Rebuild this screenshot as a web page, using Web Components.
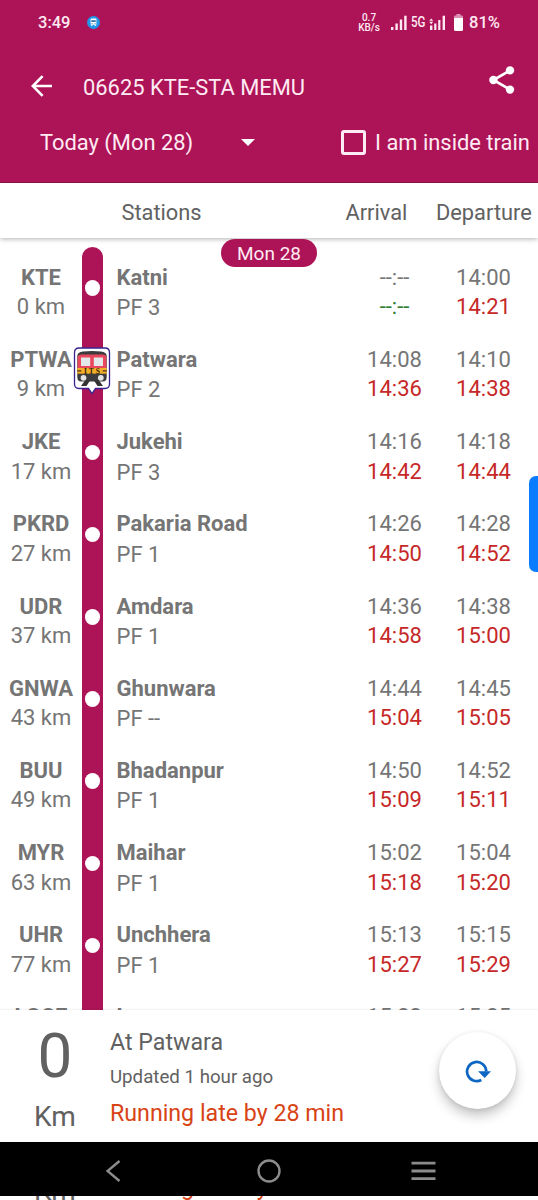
<!DOCTYPE html>
<html lang="en">
<head>
<meta charset="utf-8">
<meta name="viewport" content="width=device-width, initial-scale=1">
<title>06625 KTE-STA MEMU</title>
<style>
    html, body {
        margin: 0;
        height: 1200px;
        overflow: hidden;
    }

    body {
        font-family: Roboto, "Liberation Sans", sans-serif;
        background: #fff;
    }
</style>
</head>
<body>
<train-app></train-app>

<script>
const html = String.raw;

class BaseElement extends HTMLElement {
    constructor() {
        super();
        this.attachShadow({ mode: 'open' });
    }

    connectedCallback() {
        this.shadowRoot.innerHTML = this.render();
    }
}

/** System status bar: clock, network speed, signal and battery. */
class StatusBar extends BaseElement {
    render() {
        return html`
            <style>
                :host {
                    display: flex;
                    align-items: center;
                    height: 45px;
                    padding-left: 38px;
                    color: #ffe9f2;
                    font-weight: 500;
                    white-space: nowrap;
                }
                svg { display: block; flex: none; }
                .time { width: 49px; font-size: 16.5px; }
                .speed {
                    width: 24px;
                    margin-left: 257px;
                    text-align: center;
                    font-size: 10px;
                    line-height: 10px;
                }
                .signal { margin-left: 10px; }
                .net { width: 18px; margin-left: 4px; font-size: 14.5px; }
                .net span { display: block; transform: scaleX(.8); transform-origin: 0 50%; }
                .battery { margin-left: 8px; }
                .level { margin-left: 6px; font-size: 16.5px; }
            </style>
            <span class="time">3:49</span>
            <svg width="13" height="13" viewBox="0 0 13 13">
                <circle cx="6.5" cy="6.5" r="6.5" fill="#2196e8"/>
                <path d="M3.6 3.6q0-1 1-1h3.8q1 0 1 1v5.2H3.6z" fill="#fff"/>
                <path d="M4.3 4.3h4.4v1.6H4.3z" fill="#1c5f9c"/>
                <path d="M4.2 9h1.2v1H4.2zM7.6 9h1.2v1H7.6z" fill="#fff"/>
                <circle cx="5" cy="7.5" r=".5" fill="#1c5f9c"/>
                <circle cx="8" cy="7.5" r=".5" fill="#1c5f9c"/>
            </svg>
            <span class="speed">0.7<br>KB/s</span>
            <svg class="signal" width="16" height="15" viewBox="0 0 16 15" fill="currentColor">
                <path d="M0 12h2.4v3H0zM4.4 8.6h2.4V15H4.4zM8.8 4.6h2.4V15H8.8zM13.2.8h2.4V15h-2.4z"/>
            </svg>
            <span class="net"><span>5G</span></span>
            <svg width="17" height="15" viewBox="0 0 17 15" fill="currentColor">
                <path d="M1 10.6h2.4V15H1zM5.2 8.6h2.2V15H5.2zM9.2 5h2.2v10H9.2zM13.6.8H16V15h-2.4z"/>
                <path d="M2.2 3.4l2 2.4h-4zM2.2 9.2l2-2.4h-4z"/>
            </svg>
            <svg class="battery" width="9" height="17" viewBox="0 0 9 17">
                <path d="M2.4 0h4.2v1.4H7.6Q9 1.4 9 2.8V4H0V2.8Q0 1.4 1.4 1.4h1z" fill="#dc8fb2"/>
                <path d="M0 4h9v11.4Q9 17 7.4 17H1.6Q0 17 0 15.4z" fill="#fff"/>
            </svg>
            <span class="level">81%</span>
        `;
    }
}

/** Coloured header with title, day selector and the inside-train checkbox. */
class AppHeader extends BaseElement {
    render() {
        return html`
            <style>
                :host {
                    display: block;
                    box-sizing: border-box;
                    height: 183px;
                    background: #ad1457;
                    border-bottom: 1px solid #8a1247;
                    color: #ffebf3;
                    font-size: 21.9px;
                    white-space: nowrap;
                }
                svg { display: block; flex: none; }
                .bar { display: flex; align-items: center; height: 84px; padding-left: 31px; }
                .back { margin-top: -3px; }
                .title { margin-left: 31px; width: 406px; }
                .share { margin-top: -14px; }
                .options { display: flex; align-items: center; height: 26px; padding-left: 40px; }
                .day { width: 201px; }
                .box {
                    box-sizing: border-box;
                    width: 25px;
                    height: 25px;
                    margin: 0 9px 0 86px;
                    border: 3px solid #ffebf3;
                    border-radius: 3px;
                }
            </style>
            <status-bar></status-bar>
            <div class="bar">
                <svg class="back" width="21" height="22" viewBox="0 0 21 22" fill="none" stroke="#fff" stroke-width="2.6">
                    <path d="M21 11H2M11.6 1.2L1.8 11l9.8 9.8"/>
                </svg>
                <span class="title"><slot name="title"></slot></span>
                <svg class="share" width="26" height="28" viewBox="0 0 26 28">
                    <path d="M21 4.4L4.4 14 21 23.6" fill="none" stroke="#fff" stroke-width="2.6"/>
                    <g fill="#fff">
                        <circle cx="21" cy="4.4" r="4.2"/>
                        <circle cx="4.4" cy="14" r="4.2"/>
                        <circle cx="21" cy="23.6" r="4.2"/>
                    </g>
                </svg>
            </div>
            <div class="options">
                <span class="day"><slot name="day"></slot></span>
                <svg width="14" height="7" viewBox="0 0 14 7"><path d="M0 0h14L7 7z" fill="#fff"/></svg>
                <span class="box"></span>
                <span class="inside">I am inside train</span>
            </div>
        `;
    }
}

class TrainMarker extends BaseElement {
    render() {
        return html`
            <style>
                :host { display: block; width: 38px; height: 48px; }
                svg { display: block; }
            </style>
            <svg width="38" height="48" viewBox="0 0 38 48">
                <path d="M6 1h26q4.5 0 4.5 4.5v31.500q0 4.500-4.500 4.500h-9.500L19 46.500l-3.500-5H6q-4.500 0-4.500-4.500V5.500Q1.500 1 6 1z" fill="#fff" stroke="#3a2390" stroke-width="1.300"/>
                <path d="M4.300 9q0-4 5.700-4.500 9-.8 18 0 5.700 .5 5.700 4.500v21q0 4.500-4 4.500H8.300q-4 0-4-4.500z" fill="#3c3b3d"/>
                <path d="M4.600 21v-10.500q0-3 4-3h20.800q4 0 4 3V21z" fill="#e9475c"/>
                <path d="M4.300 21h29.400v5.700H4.300z" fill="#f4ad28"/>
                <path d="M8 10.500h9.200v8.500H8zM20.800 10.500H30v8.500h-9.200z" fill="#e3e8ea"/>
                <path d="M4.300 23.300h4v1.300h-4zM29.700 23.300h4v1.300h-4z" fill="#4a3210"/>
                <path d="M12 33.500h5L13.500 39H8zM21 33.500h5L30 39h-5.500z" fill="#333"/>
                <circle cx="10.500" cy="30.800" r="2.900" fill="#e3e3e3"/>
                <circle cx="27.800" cy="30.800" r="2.900" fill="#e3e3e3"/>
                <text x="20" y="26.500" text-anchor="middle" font-family="Liberation Serif, serif" font-weight="700" font-size="7.500" letter-spacing="2" fill="#2d2108">ITS</text>
            </svg>
        `;
    }
}

/**
 * One stop of the route.
 *
 * @attribute {string} code - station code
 * @attribute {string} km - distance from the origin
 * @attribute {string} name - station name
 * @attribute {string} pf - platform
 * @attribute {string} arr - scheduled and actual arrival, space separated
 * @attribute {string} dep - scheduled and actual departure, space separated
 * @attribute {boolean} first - rounds the top of the rail
 * @attribute {boolean} current - shows the train marker
 */
class StationRow extends BaseElement {
    times(attr) {
        const [plan, real] = this.getAttribute(attr).split(' ');
        const cls = real.startsWith('-') ? 'ok' : 'late';
        return html`<div class="time"><div>${plan}</div><div class="${cls}">${real}</div></div>`;
    }

    render() {
        const a = n => this.getAttribute(n);
        const mark = this.hasAttribute('current') ? '<train-marker></train-marker>' : '<i></i>';
        return html`
            <style>
                :host {
                    display: grid;
                    grid-template-columns: 82px 21px 247px 89px 89px;
                    height: 82.2px;
                    color: #757575;
                    font-size: 22px;
                    line-height: 29.5px;
                    white-space: nowrap;
                }
                b { display: block; font-weight: 700; }
                .code, .name, .time { padding-top: 15.8px; }
                .code { display: flex; flex-direction: column; align-items: center; }
                .name { padding-left: 13.5px; }
                .name div { line-height: 31px; }
                .time { text-align: center; }
                .rail {
                    position: relative;
                    display: flex;
                    align-items: center;
                    justify-content: center;
                    background: #ad1457;
                }
                :host([first]) .rail { border-radius: 10.5px 10.5px 0 0; }
                i { width: 15.5px; height: 15.5px; border-radius: 50%; background: #fff; }
                train-marker { position: absolute; left: -9px; top: 18px; }
                .late { color: #c62828; }
                .ok { color: #2e7d32; }
            </style>
            <div class="code"><b>${a('code')}</b><span>${a('km')} km</span></div>
            <div class="rail">${mark}</div>
            <div class="name"><b>${a('name')}</b><div>PF ${a('pf')}</div></div>
            ${this.times('arr')}
            ${this.times('dep')}
        `;
    }
}

class StationList extends BaseElement {
    render() {
        return html`
            <style>
                :host { display: block; height: 827px; overflow: hidden; position: relative; }
                .head {
                    position: relative;
                    display: flex;
                    align-items: center;
                    height: 55px;
                    padding: 3px 0 0 121.5px;
                    box-sizing: border-box;
                    background: #fff;
                    box-shadow: 0 1px 5px rgba(0, 0, 0, .3);
                    color: #616161;
                    font-size: 21.8px;
                    white-space: nowrap;
                }
                .head span:nth-child(1) { width: 224px; }
                .head span:nth-child(2) { width: 90.5px; }
                .rows { padding-top: 9px; }
                .chip {
                    position: absolute;
                    left: 221px;
                    top: 56px;
                    width: 96px;
                    height: 28px;
                    border-radius: 14px;
                    background: #ad1457;
                    color: #ffebf3;
                    font-size: 19px;
                    line-height: 29px;
                    text-align: center;
                }
                .handle {
                    position: absolute;
                    right: -8px;
                    top: 293px;
                    width: 17px;
                    height: 96px;
                    border-radius: 7px;
                    background: #0a7cff;
                }
            </style>
            <div class="head"><span>Stations</span><span>Arrival</span><span>Departure</span></div>
            <div class="rows"><slot></slot></div>
            <div class="chip">Mon 28</div>
            <div class="handle"></div>
        `;
    }
}

/** Position summary: distance on the left, running status beside it. */
class RunStatus extends BaseElement {
    render() {
        return html`
            <style>
                :host {
                    display: flex;
                    height: 132px;
                    background: #fff;
                    color: #616161;
                    white-space: nowrap;
                }
                .dist { width: 110px; text-align: center; }
                .dist div { font-size: 62px; line-height: 92px; }
                .dist span { display: block; font-size: 28px; line-height: 29px; }
                .info { padding-top: 16px; }
                .at { font-size: 23.2px; line-height: 32px; }
                .small { font-size: 18.7px; line-height: 39px; }
                .late { color: #d84315; font-size: 23.2px; line-height: 32px; }
            </style>
            <div class="dist"><div>0</div><span>Km</span></div>
            <div class="info">
                <div class="at">At Patwara</div>
                <div class="small">Updated 1 hour ago</div>
                <div class="late">Running late by 28 min</div>
            </div>
        `;
    }
}

class RefreshButton extends BaseElement {
    render() {
        return html`
            <style>
                :host {
                    display: grid;
                    place-items: center;
                    width: 77px;
                    height: 77px;
                    border-radius: 50%;
                    background: #fff;
                    box-shadow: 0 7px 12px rgba(0, 0, 0, .22), 0 1px 4px rgba(0, 0, 0, .1);
                }
                svg { display: block; }
            </style>
            <svg width="28" height="24" viewBox="0 0 28 24">
                <path d="M22.300 12.500A9.600 9.600 0 1 0 17.300 21" fill="none" stroke="#0d66c2" stroke-width="2.700"/>
                <path d="M14 12.200h13l-6.300 6.800z" fill="#0d66c2"/>
            </svg>
        `;
    }
}

class NavBar extends BaseElement {
    render() {
        return html`
            <style>
                :host {
                    display: flex;
                    align-items: center;
                    box-sizing: border-box;
                    height: 54px;
                    padding: 4px 0 0 106px;
                    background: #000;
                }
                svg { display: block; }
                .home { margin-left: 137px; }
                .menu { margin-left: 130px; }
            </style>
            <svg width="14" height="22" viewBox="0 0 14 22" fill="none" stroke="#8c8c8c" stroke-width="2.4">
                <path d="M13.5 1L1.5 11l12 10"/>
            </svg>
            <svg class="home" width="24" height="24" viewBox="0 0 24 24" fill="none" stroke="#8c8c8c" stroke-width="2.4">
                <circle cx="12" cy="12" r="10.5"/>
            </svg>
            <svg class="menu" width="25" height="20" viewBox="0 0 25 20" stroke="#8c8c8c" stroke-width="2.8">
                <path d="M.5 2.2h24M.5 10h24M.5 17.7h24"/>
            </svg>
        `;
    }
}

class TrainApp extends BaseElement {
    render() {
        const stops = [
            ['KTE', 0, 'Katni', 3, '--:-- --:--', '14:00 14:21'],
            ['PTWA', 9, 'Patwara', 2, '14:08 14:36', '14:10 14:38'],
            ['JKE', 17, 'Jukehi', 3, '14:16 14:42', '14:18 14:44'],
            ['PKRD', 27, 'Pakaria Road', 1, '14:26 14:50', '14:28 14:52'],
            ['UDR', 37, 'Amdara', 1, '14:36 14:58', '14:38 15:00'],
            ['GNWA', 43, 'Ghunwara', '--', '14:44 15:04', '14:45 15:05'],
            ['BUU', 49, 'Bhadanpur', 1, '14:50 15:09', '14:52 15:11'],
            ['MYR', 63, 'Maihar', 1, '15:02 15:18', '15:04 15:20'],
            ['UHR', 77, 'Unchhera', 1, '15:13 15:27', '15:15 15:29'],
            ['LGCE', 87, 'Lagargawan', 1, '15:23 15:36', '15:25 15:38'],
        ];
        const rows = stops.map(([code, km, name, pf, arr, dep], i) => html`
            <station-row code="${code}" km="${km}" name="${name}" pf="${pf}" arr="${arr}" dep="${dep}"
                ${i === 0 ? 'first' : ''} ${i === 1 ? 'current' : ''}></station-row>
        `).join('');

        return html`
            <style>
                :host { display: block; width: 538px; height: 1200px; overflow: hidden; }
                .panel {
                    position: relative;
                    height: 132px;
                    box-shadow: 0 -1px 2px rgba(0, 0, 0, .06);
                }
                refresh-button { position: absolute; left: 439px; top: 22px; }
                nav-bar { position: relative; }
                /* sliver of the panel that shows under the navigation bar */
                .under { display: flex; align-items: flex-end; height: 4px; overflow: hidden; }
                .under run-status { margin-bottom: -16px; }
            </style>
            <app-header>
                <span slot="title">06625 KTE-STA MEMU</span>
                <span slot="day">Today (Mon 28)</span>
            </app-header>
            <station-list>${rows}</station-list>
            <div class="panel">
                <run-status></run-status>
                <refresh-button></refresh-button>
            </div>
            <nav-bar></nav-bar>
            <div class="under"><run-status></run-status></div>
        `;
    }
}

customElements.define('status-bar', StatusBar);
customElements.define('app-header', AppHeader);
customElements.define('train-marker', TrainMarker);
customElements.define('station-row', StationRow);
customElements.define('station-list', StationList);
customElements.define('run-status', RunStatus);
customElements.define('refresh-button', RefreshButton);
customElements.define('nav-bar', NavBar);
customElements.define('train-app', TrainApp);
</script>
</body>
</html>
